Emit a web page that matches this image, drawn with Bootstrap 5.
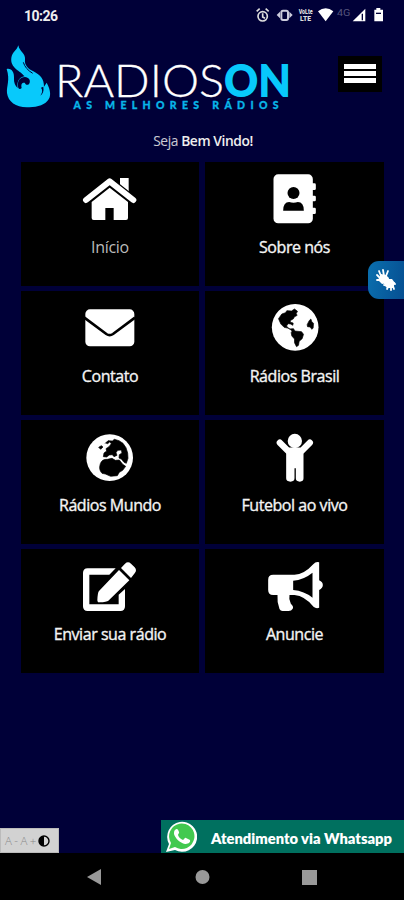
<!DOCTYPE html>
<html lang="pt-BR">
<head>
<meta charset="utf-8">
<meta name="viewport" content="width=device-width, initial-scale=1">
<title>RadiosOn</title>
<link href="https://cdn.jsdelivr.net/npm/bootstrap@5.3.0/dist/css/bootstrap.min.css" rel="stylesheet">
<style>
body{background:#000038;color:#eee;font-family:"Open Sans","Noto Sans",sans-serif}
svg{display:block;flex:none}
.screen{width:404px;height:900px}
.status{height:32px;padding:1px 21px 0 24px}
.clock{font:700 14px/31px Roboto,sans-serif;letter-spacing:-.5px}
.brandrow{height:94px}
.menu-btn{width:44px;height:36px;margin:24px 22px 0 0;padding:8px 6px;border-radius:0;background:#000;border:0;gap:2px}
.menu-btn span{height:5px;background:#fff;flex:none}
.welcome{height:36px;font-size:13.8px;line-height:29px;letter-spacing:-.42px;padding-left:2px}
.welcome span{opacity:.85}
.welcome b{font-weight:600}
.tiles{display:grid;grid-template-columns:178px 179px;gap:4.8px 6px;padding-left:21px}
.tile{height:124.2px;background:#000;color:#f4f4f4;padding-top:8px;text-decoration:none;font-size:16px;line-height:22px;letter-spacing:-.45px;-webkit-text-stroke:.35px;white-space:nowrap}
.tile span{margin-top:10px}
.tile.dim{color:#bbb;-webkit-text-stroke:0;letter-spacing:-.3px}
.hands{right:0;top:261px;width:36px;height:38px;border-radius:11px 0 0 11px;background:linear-gradient(100deg,#0a6fae,#064f92);padding:7px 6px}
.access{width:59px;height:25px;background:#d2d2d2;border:1px solid #bbb;color:#888;font:300 11.5px/23px "Open Sans",sans-serif;padding-left:4px;letter-spacing:-.3px;white-space:nowrap}
.whats{width:243px;height:33px;background:#00705f;color:#fff;padding-left:3px}
.sysnav{height:47px;background:#000}
</style>
</head>
<body>
<main class="screen d-flex flex-column position-relative overflow-hidden">
<div class="status d-flex justify-content-between">
  <span class="clock">10:26</span>
  <svg width="130" height="20" viewBox="150 17 390 60" class="mt-1">
    <g fill="none" stroke="#ddd" stroke-width="5"><circle cx="179" cy="51" r="14"/><path d="M179 42v11l7 4M161 36l9-8M197 36l-9-8"/></g>
    <rect x="235" y="34" width="20" height="28" rx="5" fill="none" stroke="#ccd" stroke-width="6"/><path d="M231 37v20l-10-10zM259 37v20l10-10z" fill="#ccd"/>
    <g fill="#ddd" font-family="Roboto" font-weight="900"><text x="287" y="44" font-size="20" textLength="42" lengthAdjust="spacingAndGlyphs">VoLte</text><text x="291" y="65" font-size="20" textLength="33" lengthAdjust="spacingAndGlyphs">LTE</text></g>
    <path d="M345 36q23-18 46 0l-23 30z" fill="#fff"/>
    <text x="402" y="50" font-family="Roboto" font-size="26" fill="#55557d" textLength="40" lengthAdjust="spacingAndGlyphs">4G</text>
    <path d="M449 66l38-38v38z" fill="#fff"/><path d="M478 43v20" stroke="#000038" stroke-width="4"/>
    <path d="M514 31h6v-5h12v5h8v35h-26z" fill="#fff"/><path d="M519 42h15" stroke="#000038" stroke-width="4"/>
  </svg>
</div>
<header class="brandrow d-flex justify-content-between">
  <svg width="300" height="84" viewBox="0 32 300 84" role="img" aria-label="RadiosOn">
    <g transform="scale(.3333)"><path fill="#08c9fb" d="M55 136C58 155 78 160 75 180C73 195 84 206 100 214C122 225 132 238 132 260L140 248C152 270 155 290 142 303C130 318 103 322 80 322C48 322 24 305 21 279C19 257 31 241 20 207C35 204 43 217 42 234C41 248 46 258 53 264C50 245 57 232 74 229C62 212 30 205 34 173C37 156 50 152 55 136Z"/><path d="M55 264C50 243 60 231 75 231C86 232 92 240 89 248C86 257 76 256 75 249C67 247 62 253 65 264C61 268 58 268 55 264Z" fill="#000038"/><path d="M70 187q6 20 28 33" stroke="#000038" stroke-width="3" fill="none"/><path d="M123 263q8 10-2 24q12-8 9-27z" fill="#000038"/></g>
    <text x="55" y="97" font-family="Lato" font-weight="300" font-size="44.500" fill="#fff" stroke="#fff" stroke-width=".3" textLength="169" lengthAdjust="spacingAndGlyphs">RADIOS</text>
    <text x="224" y="97" font-family="Lato" font-weight="800" font-size="44.500" fill="#08c9fb" textLength="67" lengthAdjust="spacingAndGlyphs">ON</text>
    <text x="73.500" y="109" font-family="Lato" font-weight="900" font-size="10.500" fill="#08b5e8" stroke="#08b5e8" stroke-width=".3" textLength="205">AS MELHORES RÁDIOS</text>
  </svg>
  <button class="menu-btn d-flex flex-column" aria-label="Menu"><span class="w-100"></span><span class="w-100"></span><span class="w-100"></span></button>
</header>
<div class="welcome text-center"><span>Seja</span> <b>Bem Vindo!</b></div>
<nav class="tiles">
  <a href="#" class="tile dim d-flex flex-column align-items-center">
    <svg width="64" height="56" viewBox="234 150 192 168" fill="#fff"><path d="M360 174h26v50l-26-20z"/><path d="M258 240l71-56 71 56" fill="none" stroke="#000" stroke-width="25"/><path d="M329 203l55 43v48q0 6-6 6h-37v-36h-25v36h-35q-6 0-6-6v-48z"/><path d="M258 240l71-56 71 56" fill="none" stroke="#fff" stroke-width="18" stroke-linecap="round" stroke-linejoin="round"/></svg>
    <span>Início</span></a>
  <a href="#" class="tile d-flex flex-column align-items-center">
    <svg width="64" height="56" viewBox="181.500 150 192 168" fill="#fff"><rect x="213" y="163" width="118" height="147" rx="14"/><path d="M326 190h10q4 0 4 4v12q0 4-4 4h-10zM326 227h10q4 0 4 4v9q0 4-4 4h-10zM326 263h10q4 0 4 4v11q0 4-4 4h-10z"/><g fill="#000"><circle cx="273" cy="219" r="18"/><path d="M242 272q0-26 18-26 13 5 26 0 18 0 18 26z"/></g></svg>
    <span>Sobre nós</span></a>
  <a href="#" class="tile d-flex flex-column align-items-center">
    <svg width="64" height="56" viewBox="234 42 192 168"><rect x="256" y="73" width="147" height="111" rx="14" fill="#fff"/><path d="M253 98l66 49q10 7 20 0l66-49" fill="none" stroke="#000" stroke-width="8"/></svg>
    <span>Contato</span></a>
  <a href="#" class="tile d-flex flex-column align-items-center">
    <svg width="64" height="56" viewBox="181.500 42 192 168"><circle cx="278" cy="127" r="70" fill="#fff"/><path d="M228 101l10-14 11-4 4-6 14 1 9-6 9 7-4 7 3 5-9 5-2 5-10 6 1 5 8 2-1 7-7-4-7-1-5 7 8 9 13-1 4 7 20 2 6 8-4 13-9 8-2 12-6 4-6-12v-11l-8-9-2-10 3-5-10-8-14-3-10-10zM314 119l6-12 5-5 3 8 5 5-1 14-4 4-5-7-8-1z" fill="#000" stroke="#000" stroke-width="2"/></svg>
    <span>Rádios Brasil</span></a>
  <a href="#" class="tile d-flex flex-column align-items-center">
    <svg width="64" height="56" viewBox="234 36 192 168"><circle cx="329" cy="125" r="70" fill="#fff"/><path d="M316 82l8-8 13 1 6-5 14 4 12 8 9 13 5 16 1 16-5 15-7-3-7-9-8-4 1-10 8-5-2-9-11 1-5 7 3 8-9 4-5-6-9 1-8 6-10-1 2-11 8-6-2-7 9-6 7-9-5-5-6 5-6-2zM296 94l8-5 5 4-7 7zM301 143q5-14 21-13l14-3 10 6 12-1 10 13 9 6-9 12-10 6-6 10-20 2-16-7-10-2q-11-11-5-29z" fill="#000" stroke="#000" stroke-width="2"/></svg>
    <span>Rádios Mundo</span></a>
  <a href="#" class="tile d-flex flex-column align-items-center">
    <svg width="64" height="56" viewBox="181.500 36 192 168"><circle cx="277" cy="75" r="21.500" fill="#fff"/><path d="M232 80l24 24h42l24-24" fill="none" stroke="#fff" stroke-width="19" stroke-linecap="round" stroke-linejoin="round"/><path d="M251 100h52v87q0 10-11 10-12 0-12-10v-30h-4v30q0 10-12 10-13 0-13-10z" fill="#fff"/></svg>
    <span>Futebol ao vivo</span></a>
  <a href="#" class="tile d-flex flex-column align-items-center">
    <svg width="64" height="56" viewBox="234 33 192 168" fill="#fff"><path d="M263 67h84l-19 19h-60v89h88v-29l19-17v52q0 14-14 14h-98q-14 0-14-14v-100q0-14 14-14z"/><path d="M357 72l31 31-63 61q-4 4-27 5-6 1-6-6 1-24 5-28zM363 66l12-13q9-8 18 0l11 11q8 9 0 18l-11 14z"/></svg>
    <span>Enviar sua rádio</span></a>
  <a href="#" class="tile d-flex flex-column align-items-center">
    <svg width="64" height="56" viewBox="181.500 33 192 168"><path fill="#fff" fill-rule="evenodd" d="M212 86h64q28 0 57-32 7-8 17-5v54q11 5 11 14t-11 15v53q-9 4-17-3-26-32-57-35h-15q-3 13 4 26 10 9 5 16-3 6-12 6h-18q-6 0-9-6-8-22-6-42h-13q-15 0-15-15v-31q0-15 15-15zM272 104v28q33 3 58 23V80q-27 22-58 24z"/></svg>
    <span>Anuncie</span></a>
</nav>
<a href="#" class="hands position-absolute" aria-label="Libras">
  <svg width="24" height="24" viewBox="0 0 24 24"><path d="M7 6l5 1 3 3-2 5-5 1-4-4zM12 11l6 0 3 4-2 5-6 0-3-4z" fill="#fff"/><path d="M7 8L5 3M10 8L9 2M12 8l2-5M6 10L3 7M6 12H3M14 11l-3 1M13 18l-3-1M14 19l-1 2M17 19v3M19 18l1 3M20 15l1 1" stroke="#fff" stroke-width="1.800" stroke-linecap="round"/></svg>
</a>
<div class="mt-auto d-flex justify-content-between align-items-end">
  <div class="access d-flex align-items-center"><span>A - A +</span><svg width="12" height="12" viewBox="0 0 12 12" class="ms-auto me-2"><circle cx="6" cy="6" r="5" fill="#d2d2d2" stroke="#000" stroke-width="1.400"/><path d="M6 1a5 5 0 0 0 0 10z"/></svg></div>
  <a href="#" class="whats d-flex align-items-center text-decoration-none">
    <svg width="33" height="33" viewBox="0 0 33 33"><path d="M2 32l3-8a15 15 0 1 1 6 6z" fill="#fff"/><path d="M5 29l2-6a12.700 12.700 0 1 1 4 4z" fill="#42c94f"/><path d="M11 10c2-2 3-1 4 2 .6 1-1 2-1 3 1 3 3 4 5 5 1 0 2-3 3-2l4 2c1 3-3 4-5 4-5-1-10-6-11-10 0-2 0-3 1-4z" fill="#fff"/></svg>
    <svg width="188" height="33" viewBox="0 0 188 33" class="ms-auto me-2"><text x="3" y="24" font-family="Lato" font-weight="800" font-size="14" fill="#fff" textLength="181" lengthAdjust="spacingAndGlyphs">Atendimento via Whatsapp</text></svg>
  </a>
</div>
<div class="sysnav"><svg width="404" height="47" viewBox="0 0 404 47" fill="#999"><path d="M87 24l14-8v16z"/><circle cx="202.500" cy="24" r="7"/><rect x="302" y="17" width="15" height="15"/></svg></div>
</main>
<script src="https://cdn.jsdelivr.net/npm/bootstrap@5.3.0/dist/js/bootstrap.bundle.min.js"></script>
</body>
</html>
